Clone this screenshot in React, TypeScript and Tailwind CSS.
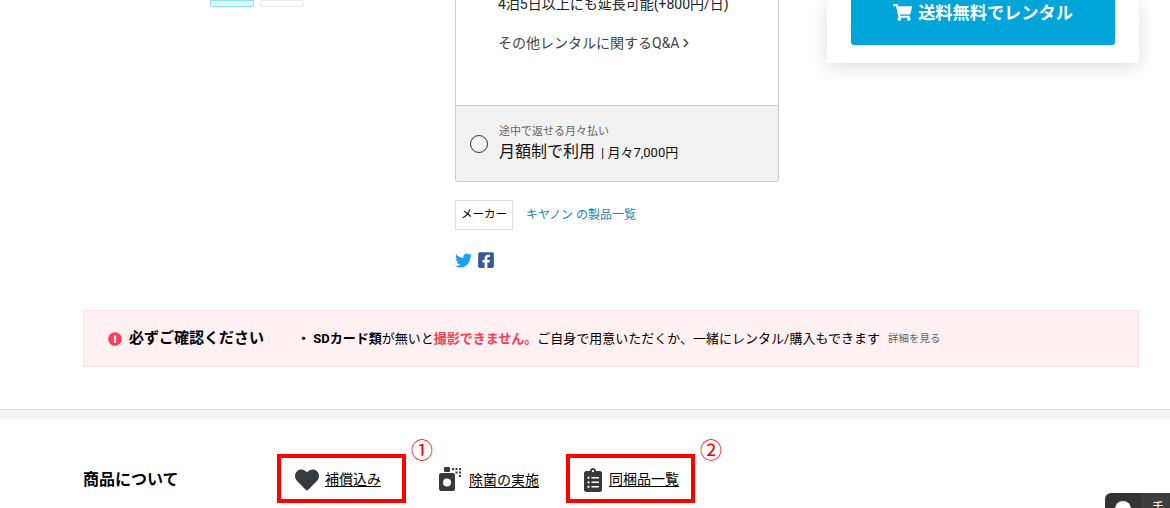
import { FaClipboardList, FaExclamationCircle, FaFacebookSquare, FaHeart, FaShoppingCart, FaTwitter } from 'react-icons/fa'
import { ChevronRight } from 'lucide-react'

const font = "font-['Roboto','Noto_Sans_CJK_JP',sans-serif]"

function SprayIcon() {
  return (
    <svg width="24" height="24" viewBox="0 0 24 24" className="-mt-[2px] text-[#343a40]">
      <rect x="5" y="0" width="6" height="5" rx="1" fill="currentColor" />
      <path fillRule="evenodd" fill="currentColor" d="M2 6h12a2 2 0 0 1 2 2v14a2 2 0 0 1-2 2H2a2 2 0 0 1-2-2V8a2 2 0 0 1 2-2zm6 5.5a4 4 0 1 0 0 8 4 4 0 0 0 0-8z" />
      {[[13, 1], [16.5, 1], [20, 1], [16.5, 4.5], [20, 4.5], [20, 8]].map(([x, y]) => (
        <rect key={`${x}-${y}`} x={x} y={y} width="2" height="2" fill="currentColor" />
      ))}
    </svg>
  )
}

function Feature({ icon, label, gap }: { icon: React.ReactNode; label: string; gap: string }) {
  return (
    <a className={`flex items-center ${gap} text-[14px] text-black`}>
      {icon}
      <span className="underline underline-offset-2">{label}</span>
    </a>
  )
}

export default function App() {
  return (
    <div className={`relative h-[508px] w-[1170px] overflow-hidden bg-white ${font}`}>
      <div className="flex h-[310px] items-start">
        <div className="flex w-[455px] gap-[6px] pl-[210px]">
          <div className="h-[7px] w-[44px] rounded-b-[2px] border border-[#8fe3ee] bg-[#e3f8fb]" />
          <div className="h-[7px] w-[44px] rounded-b-[2px] border border-[#eeeeee] bg-white" />
        </div>

        <div className="w-[324px]">
          <div className="overflow-hidden rounded-b-[3px] border border-t-0 border-[#cccccc]">
            <div className="flex h-[105px] flex-col pl-[42px]">
              <p className="-mt-[8px] text-[14px] leading-[24px] text-[#222222]">4泊5日以上にも延長可能(+800円/日)</p>
              <a className="mt-[15px] flex items-center text-[14px] leading-[24px] text-[#444444]">
                その他レンタルに関するQ&amp;A
                <ChevronRight size={14} strokeWidth={2.5} />
              </a>
            </div>
            <div className="flex h-[76px] items-center gap-[11px] border-t border-[#cccccc] bg-[#f2f2f2] pl-[14px]">
              <span className="h-[18px] w-[18px] rounded-full border-[1.5px] border-[#333333] bg-white/20" />
              <div className="pt-[2px]">
                <p className="text-[11px] leading-[14px] text-[#666666]">途中で返せる月々払い</p>
                <p className="mt-[1px] flex items-baseline text-[13px] leading-[24px] text-[#111111]">
                  <span className="text-[16px]">月額制で利用</span>
                  <span className="ml-[6px]">| 月々7,000円</span>
                </p>
              </div>
            </div>
          </div>

          <div className="mt-[18px] flex items-center gap-[13px]">
            <span className="flex h-[30px] w-[58px] items-center justify-center border border-[#dddddd] text-[11.5px] text-black">メーカー</span>
            <a className="text-[12px] text-[#2a7fad]">キヤノン の製品一覧</a>
          </div>

          <div className="mt-[21px] flex items-center gap-[5px]">
            <FaTwitter size={17} className="text-[#1da1f2]" />
            <FaFacebookSquare size={18} className="text-[#3b5998]" />
          </div>
        </div>

        <div className="ml-[48px] h-[63px] w-[312px] bg-white shadow-[0_4px_16px_rgba(0,0,0,0.13)]">
          <button className="ml-[24px] flex h-[45px] w-[264px] items-end justify-center gap-[6px] rounded-b-[3px] bg-[#00a5d9] pb-[20px] text-[17.2px] font-bold leading-[24px] text-white">
            <FaShoppingCart size={19} className="mb-[3px]" />
            送料無料でレンタル
          </button>
        </div>
      </div>

      <div className="mx-[83px] flex h-[57px] w-[1056px] items-center border border-[#fde3e6] bg-[#fff0f2] pl-[24px]">
        <FaExclamationCircle size={14} className="text-[#ff3b5c]" />
        <strong className="ml-[7px] text-[15px] font-bold text-black">必ずご確認ください</strong>
        <p className="ml-[33px] text-[13px] text-black">
          <b>・ SDカード類</b>が無いと<b className="text-[#ff3b5c]">撮影できません。</b>ご自身で用意いただくか、一緒にレンタル/購入もできます
        </p>
        <a className="ml-[8px] text-[10.5px] text-[#666666]">詳細を見る</a>
      </div>

      <div className="mt-[42px] h-[10px] border-t border-[#dddddd] bg-[#f3f4f6]" />

      <div className="flex h-[90px] pl-[83px] pt-[35px]">
        <h2 className="w-[194px] pt-[14px] text-[16px] font-bold leading-[24px] text-black">商品について</h2>
        <div className="relative flex h-[49px] w-[129px] items-center border-[4px] border-[#ff0000] pl-[14px] pt-[2px]">
          <Feature gap="gap-[6px]" icon={<FaHeart size={24} className="text-[#343a40]" />} label="補償込み" />
          <span className="absolute -right-[31px] -top-[19px] text-[22px] leading-[24px] text-[#ff0000]">①</span>
        </div>
        <div className="flex h-[49px] w-[160px] items-center pl-[33px] pt-[3px]">
          <Feature gap="gap-[6px]" icon={<SprayIcon />} label="除菌の実施" />
        </div>
        <div className="relative flex h-[49px] w-[129px] items-center border-[4px] border-[#ff0000] pl-[11px] pt-[2px]">
          <Feature gap="gap-[4px]" icon={<FaClipboardList size={24} className="text-[#343a40]" />} label="同梱品一覧" />
          <span className="absolute -right-[31px] -top-[19px] text-[22px] leading-[24px] text-[#ff0000]">②</span>
        </div>
      </div>

      <div className="absolute left-[1105px] top-[493px] flex h-[40px] w-[65px] rounded-t-[6px] bg-[#333333]">
        <div className="h-full w-[36px] pl-[10px] pt-[8px]">
          <span className="block h-[16px] w-[16px] rounded-full bg-white" />
        </div>
        <div className="h-full flex-1 bg-[#3d3d3d] pl-[11px] pt-[8px] text-[12px] leading-[14px] text-white">手続き</div>
      </div>
    </div>
  )
}
